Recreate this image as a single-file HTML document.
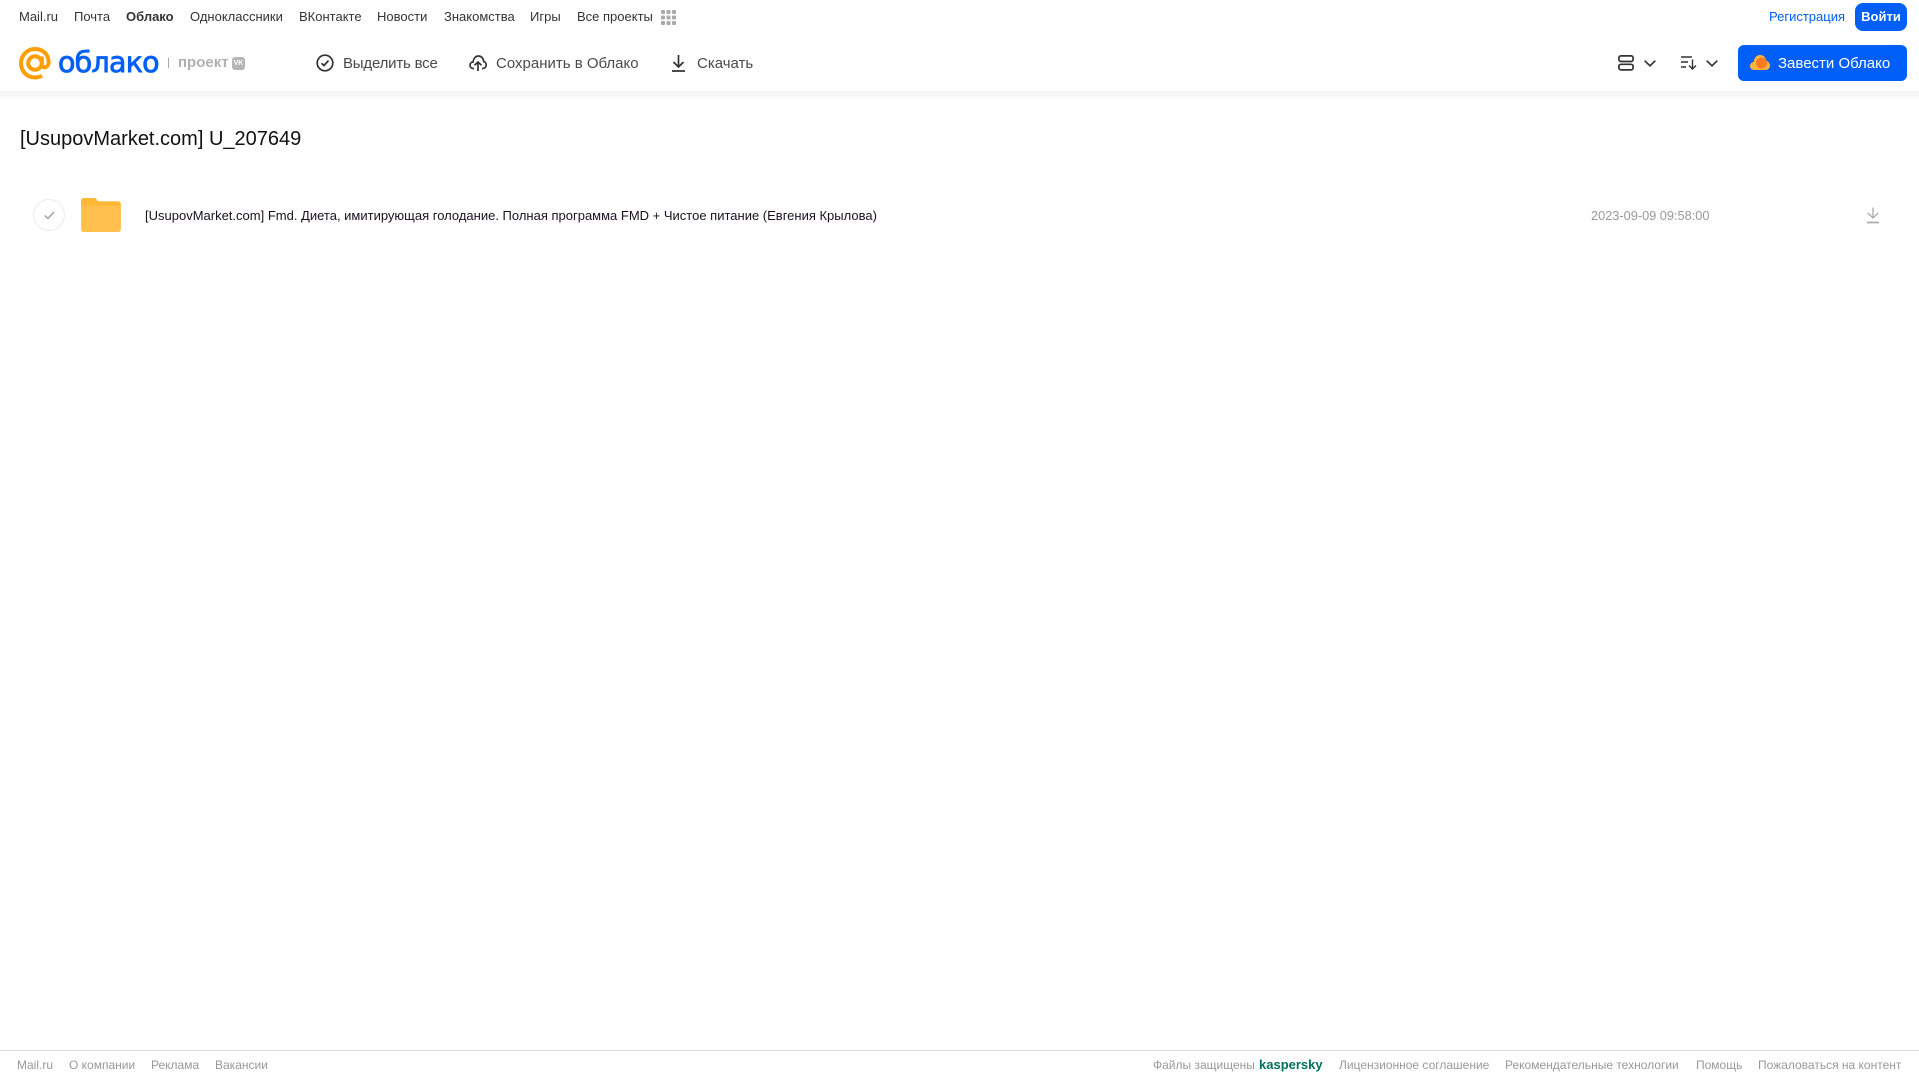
<!DOCTYPE html>
<html lang="ru"><head><meta charset="utf-8"><title>[UsupovMarket.com] U_207649</title>
<style>
html,body{margin:0;padding:0;background:#fff;width:1919px;height:1079px;overflow:hidden}
body{position:relative;font-family:"Liberation Sans",Arial,sans-serif}
.t{position:absolute;white-space:nowrap;line-height:16px}
.n{top:9px;font-size:13px;color:#333}
.h{top:55.500px;font-size:15px;color:#4a4a4a;line-height:16px}
.f{top:1057px;font-size:12px;color:#999}
svg{position:absolute;overflow:visible}
</style></head><body>
<div style="position:absolute;left:0;top:91px;width:1919px;height:10px;background:linear-gradient(#f4f4f4,#fff)"></div>
<span class="t n" style="left:19px">Mail.ru</span>
<span class="t n" style="left:74px">Почта</span>
<span class="t n" style="left:126px;font-weight:700">Облако</span>
<span class="t n" style="left:190px">Одноклассники</span>
<span class="t n" style="left:299px">ВКонтакте</span>
<span class="t n" style="left:377px">Новости</span>
<span class="t n" style="left:444px">Знакомства</span>
<span class="t n" style="left:530px">Игры</span>
<span class="t n" style="left:577px">Все проекты</span>
<svg style="left:661px;top:10px" width="15" height="15" fill="#aaa"><rect width="4" height="4" rx="1"/><rect x="5.500" width="4" height="4" rx="1"/><rect x="11" width="4" height="4" rx="1"/><rect y="5.500" width="4" height="4" rx="1"/><rect x="5.500" y="5.500" width="4" height="4" rx="1"/><rect x="11" y="5.500" width="4" height="4" rx="1"/><rect y="11" width="4" height="4" rx="1"/><rect x="5.500" y="11" width="4" height="4" rx="1"/><rect x="11" y="11" width="4" height="4" rx="1"/></svg>
<span class="t n" style="left:1769px;color:#005ff9">Регистрация</span>
<div style="position:absolute;left:1855px;top:3px;width:52px;height:28px;border-radius:8px;background:#005ff9;color:#fff;font-size:13px;font-weight:700;line-height:28px;text-align:center">Войти</div>

<svg style="left:19px;top:47px" width="32" height="33" viewBox="0 0 32 33" fill="none" stroke="#ff9e00" stroke-width="4"><circle cx="16" cy="16" r="6.800"/><path d="M22.800 9.500V17.500C22.800 21.500 29.500 21.500 29.600 15.500C29.800 7 23.500 2 16 2C8 2 2 8.500 2 16.300C2 24.300 8 30.500 16 30.500C18.800 30.500 20.800 30 23 28.700"/></svg>
<span class="t" style="left:58px;top:45px;font-size:28.500px;line-height:36px;font-family:'DejaVu Sans',sans-serif;font-weight:400;color:#005ff9;-webkit-text-stroke:.8px #005ff9;letter-spacing:-.75px">облако</span>
<div style="position:absolute;left:168px;top:58px;width:1px;height:10px;background:#aaa"></div>
<span class="t" style="left:178px;top:55px;font-size:15px;font-weight:700;color:#b0b0b0">проект</span>
<div style="position:absolute;left:232px;top:57px;width:13px;height:13px;border-radius:3px;background:#b5b5b5;color:#fff;font-size:7px;font-weight:700;line-height:13px;text-align:center">VK</div>

<svg style="left:316px;top:54px" width="18" height="18" viewBox="0 0 18 18" fill="none" stroke="#333" stroke-width="1.700"><circle cx="9" cy="9" r="7.800"/><path d="M5.500 9.300L8 11.500L12.500 6.500"/></svg>
<span class="t h" style="left:343px;letter-spacing:-.2px">Выделить все</span>
<svg style="left:469px;top:54px" width="18" height="18" viewBox="0 0 18 18" fill="none" stroke="#333" stroke-width="1.700"><path d="M5 14.500H4.500C2.300 14.500 1 13 1 11.200C1 9.400 2.300 8 4 8C4.500 4.500 6.500 2 9.500 2C12.500 2 14.500 4.500 14.700 7.500C16.200 7.800 17.200 9.300 17.200 11C17.200 13 15.700 14.500 13.500 14.500H13"/><path d="M9 17V8M5.500 11.300L9 8L12.500 11.300"/></svg>
<span class="t h" style="left:496px">Сохранить в Облако</span>
<svg style="left:671px;top:54px" width="15" height="18" viewBox="0 0 15 18" fill="none" stroke="#333" stroke-width="1.700"><path d="M7.500 1V13M2.500 8L7.500 13L12.500 8M1 17H14"/></svg>
<span class="t h" style="left:697px">Скачать</span>

<svg style="left:1618px;top:55px" width="16" height="16" viewBox="0 0 16 16" fill="none" stroke="#333" stroke-width="1.700"><rect x=".9" y=".9" width="14.200" height="5.600" rx="2"/><rect x=".9" y="9.300" width="14.200" height="5.600" rx="2"/></svg>
<svg style="left:1644px;top:60px" width="12" height="7" fill="none" stroke="#333" stroke-width="1.700"><path d="M.7.700L6 5.800L11.300.700"/></svg>
<svg style="left:1681px;top:56px" width="16" height="14" fill="none" stroke="#333" stroke-width="1.400"><path d="M0 1H11M0 6H7M0 11H5M11.500 3.500V13M8 9.500L11.500 13L15 9.500"/></svg>
<svg style="left:1706px;top:60px" width="12" height="7" fill="none" stroke="#333" stroke-width="1.700"><path d="M.7.700L6 5.800L11.300.700"/></svg>
<div style="position:absolute;left:1738px;top:45px;width:169px;height:36px;border-radius:6px;background:#005ff9"></div>
<svg style="left:1750px;top:54px" width="20" height="17" viewBox="0 0 20 17"><path d="M4.500 16C2 16 0 14.300 0 12C0 9.800 1.800 8.200 3.700 8C4.200 3.500 6.800 1 10 1C13.500 1 16 3.700 16.300 7C18.300 7.300 20 9.200 20 11.500C20 14 18 16 15.500 16Z" fill="#ffb53c"/><circle cx="11.500" cy="9" r="5.500" fill="#ff7a1f"/></svg>
<span class="t" style="left:1778px;top:55.500px;font-size:15px;color:#fff">Завести Облако</span>

<span class="t" style="left:20px;top:127px;font-size:20px;line-height:24px;color:#111">[UsupovMarket.com] U_207649</span>

<div style="position:absolute;left:33px;top:199px;width:30px;height:30px;border:1px solid #ececec;border-radius:50%"></div>
<svg style="left:43.500px;top:211px" width="11" height="9" fill="none" stroke="#999" stroke-width="1.300"><path d="M.7 4.500L4 7.500L10 1"/></svg>
<svg style="left:81px;top:198px" width="40" height="34" viewBox="0 0 41 35"><path d="M3 0H13C15 0 16 1 17 3.500H38C39.700 3.500 41 4.800 41 6.500V32C41 33.700 39.700 35 38 35H3C1.300 35 0 33.700 0 32V3C0 1.300 1.300 0 3 0Z" fill="#ffc04d"/><path d="M0 8H41V7C41 4.800 39.700 3.500 38 3.500H17C16 1 15 0 13 0H3C1.300 0 0 1.300 0 3Z" fill="#ffb836"/></svg>
<span class="t" style="left:145px;top:208px;font-size:13px;color:#1c1020">[UsupovMarket.com] Fmd. Диета, имитирующая голодание. Полная программа FMD + Чистое питание (Евгения Крылова)</span>
<span class="t" style="left:1591px;top:208px;font-size:12.800px;letter-spacing:-.02px;color:#999">2023-09-09 09:58:00</span>
<svg style="left:1866px;top:207px" width="14" height="17" fill="none" stroke="#aaa" stroke-width="1.300"><path d="M7 0.500V11M1.800 6L7 11L12.200 6"/><path d="M1 15.500H13" stroke-width="1.700"/></svg>

<div style="position:absolute;left:0;top:1050px;width:1919px;height:1px;background:#d9d9d9"></div>
<span class="t f" style="left:17px">Mail.ru</span>
<span class="t f" style="left:69px">О компании</span>
<span class="t f" style="left:151px">Реклама</span>
<span class="t f" style="left:215px">Вакансии</span>
<span class="t f" style="left:1153px">Файлы защищены</span>
<span class="t f" style="left:1259px;font-size:13px;font-weight:700;color:#00705f">kaspersky</span>
<span class="t f" style="left:1339px">Лицензионное соглашение</span>
<span class="t f" style="left:1505px">Рекомендательные технологии</span>
<span class="t f" style="left:1696px">Помощь</span>
<span class="t f" style="left:1758px">Пожаловаться на контент</span>
</body></html>
